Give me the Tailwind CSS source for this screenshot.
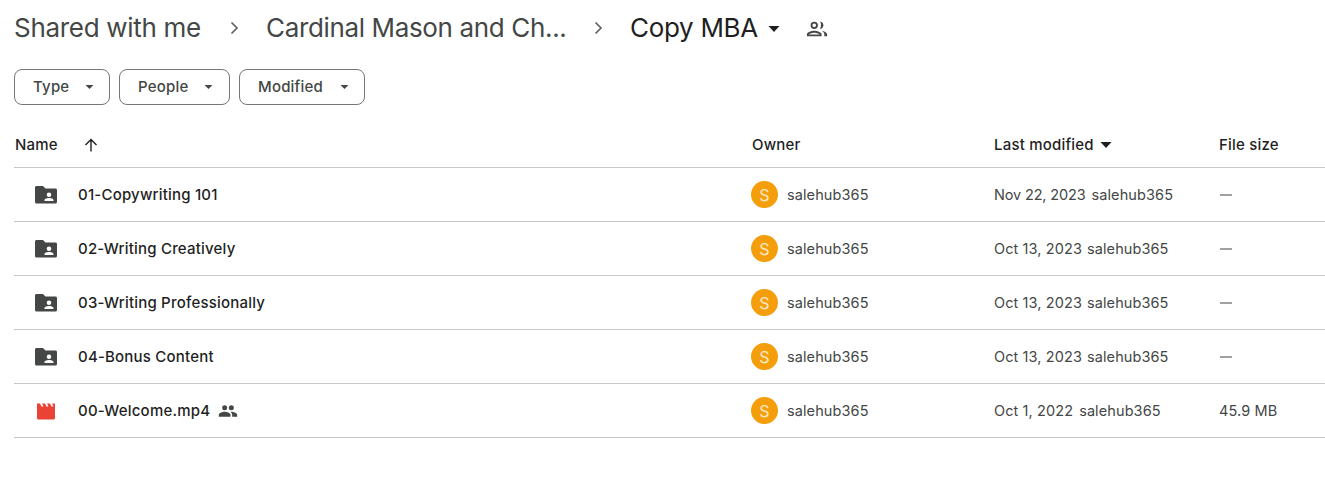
<!DOCTYPE html>
<html>
<head>
<meta charset="utf-8">
<script src="https://cdn.jsdelivr.net/npm/@tailwindcss/browser@4"></script>
</head>
<body class="bg-white font-['Inter',sans-serif] w-[1325px] h-[486px] overflow-hidden">
<div class="pl-[14px]">
  <div class="h-[54px] flex items-center text-[26px] text-[#444746] tracking-[-0.3px]">
    <span class="w-[189px] whitespace-nowrap">Shared with me</span>
    <svg class="w-[14px] h-[14px] ml-[25px] mt-[2px]" viewBox="0 0 14 14" fill="none" stroke="#5f6368" stroke-width="1.7"><path d="M3.5 1.5 9 7 3.5 12.5"/></svg>
    <span class="ml-[24px] w-[300px] whitespace-nowrap tracking-[-0.35px]">Cardinal Mason and Ch...</span>
    <svg class="w-[14px] h-[14px] ml-[26px] mt-[2px]" viewBox="0 0 14 14" fill="none" stroke="#5f6368" stroke-width="1.7"><path d="M3.5 1.5 9 7 3.5 12.5"/></svg>
    <span class="ml-[24px] w-[129px] whitespace-nowrap text-[#1f1f1f]">Copy MBA</span>
    <svg class="w-[12px] h-[6px] ml-[9px] mt-[3px]" viewBox="0 0 12 6" fill="#1f1f1f"><path d="M0.5 0h11L6 6z"/></svg>
    <svg class="w-[22px] h-[22px] ml-[26px] mt-[3px]" viewBox="0 0 24 24" fill="#444746"><path d="M9 12a4 4 0 1 0 0-8 4 4 0 0 0 0 8zm0-6a2 2 0 1 1 0 4 2 2 0 0 1 0-4zm0 8c-2.700 0-8 1.300-8 4v2h16v-2c0-2.700-5.300-4-8-4zm-6 4c.2-.7 3.300-2 6-2s5.800 1.300 6 2H3zM15.100 4.100c1.700.7 1.700 6.100 0 7.800 2.200.3 3.900-1.700 3.900-3.900s-1.700-4.200-3.900-3.900zM17 14c1.700 1 3 2.300 3 4v2h3v-2c0-2.300-3.600-3.700-6-4z"/></svg>
  </div>
  <div class="mt-[15px] flex gap-[9px] text-[15px] font-[450] text-[#444746] tracking-[0.2px]">
    <div class="w-[96px] h-[36px] border border-[#747775] rounded-[8px] flex items-center pl-[18px]"><span class="w-[52px]">Type</span><svg class="w-[9px] h-[4px]" viewBox="0 0 10 5" fill="#444746"><path d="M0 0h10L5 5z"/></svg></div>
    <div class="w-[111px] h-[36px] border border-[#747775] rounded-[8px] flex items-center pl-[18px]"><span class="w-[66px]">People</span><svg class="w-[9px] h-[4px]" viewBox="0 0 10 5" fill="#444746"><path d="M0 0h10L5 5z"/></svg></div>
    <div class="w-[126px] h-[36px] border border-[#747775] rounded-[8px] flex items-center pl-[18px]"><span class="w-[82px]">Modified</span><svg class="w-[9px] h-[4px]" viewBox="0 0 10 5" fill="#444746"><path d="M0 0h10L5 5z"/></svg></div>
  </div>
  <div class="mt-[18px] grid grid-cols-[737px_242px_225px_1fr] text-[14.5px] tracking-[0.1px]">
    <div class="h-[45px] pl-px flex items-center text-[15px] font-[450] tracking-[0.2px] text-[#1f1f1f] border-b border-[#c7c7c7]"><span class="w-[62px]">Name</span><svg class="w-[16px] h-[16px] ml-[6px]" viewBox="0 0 16 16" fill="none" stroke="#1f1f1f" stroke-width="1.4"><path d="M8 14.500V2.500M2.500 8 8 2.500 13.500 8"/></svg></div>
    <div class="h-[45px] pl-px flex items-center text-[15px] font-[450] tracking-[0.2px] text-[#1f1f1f] border-b border-[#c7c7c7]">Owner</div>
    <div class="h-[45px] pl-px flex items-center text-[15px] font-[450] tracking-[0.2px] text-[#1f1f1f] border-b border-[#c7c7c7]">Last modified<svg class="w-[12px] h-[6px] ml-[6px]" viewBox="0 0 12 6" fill="#1f1f1f"><path d="M0.500 0h11L6 6z"/></svg></div>
    <div class="h-[45px] pl-px flex items-center text-[15px] font-[450] tracking-[0.2px] text-[#1f1f1f] border-b border-[#c7c7c7]">File size</div>

    <div class="h-[54px] flex items-center border-b border-[#c7c7c7] text-[15px] font-[450] tracking-[0.2px] text-[#1f1f1f]"><svg class="w-[24px] h-[24px] ml-[20px] mr-[20px]" viewBox="0 0 24 24" fill="#444746"><path d="M1 4.500C1 3.700 1.700 3 2.500 3H9l2.500 2.500h10c.800 0 1.500.700 1.500 1.500v12c0 .800-.700 1.500-1.500 1.500h-19C1.700 20.500 1 19.800 1 19zM15 9.500a2.300 2.300 0 1 0 0 4.600 2.300 2.300 0 0 0 0-4.600zM10.500 18h9v-1c0-1.300-3-2-4.500-2s-4.500.700-4.500 2z" fill-rule="evenodd"/></svg><span class="mt-[2px]">01-Copywriting 101</span></div>
    <div class="h-[54px] flex items-center border-b border-[#c7c7c7] text-[#444746]"><span class="w-[27px] h-[27px] rounded-full bg-[#f59e0b] text-[#fde9c4] text-[16px] flex items-center justify-center mr-[9px]">S</span>salehub365</div>
    <div class="h-[54px] pl-px flex items-center border-b border-[#c7c7c7] text-[#444746] gap-[6px]"><span class="tracking-[-0.15px]">Nov 22, 2023</span><span class="tracking-[0.1px]">salehub365</span></div>
    <div class="h-[54px] pl-[2px] flex items-center border-b border-[#c7c7c7] text-[#444746]"><span class="w-[12px] h-[1.5px] mt-px bg-[#a0a2a1]"></span></div>

    <div class="h-[54px] flex items-center border-b border-[#c7c7c7] text-[15px] font-[450] tracking-[0.2px] text-[#1f1f1f]"><svg class="w-[24px] h-[24px] ml-[20px] mr-[20px]" viewBox="0 0 24 24" fill="#444746"><path d="M1 4.500C1 3.700 1.700 3 2.500 3H9l2.500 2.500h10c.800 0 1.500.700 1.500 1.500v12c0 .800-.700 1.500-1.500 1.500h-19C1.700 20.500 1 19.800 1 19zM15 9.500a2.300 2.300 0 1 0 0 4.600 2.300 2.300 0 0 0 0-4.600zM10.500 18h9v-1c0-1.300-3-2-4.500-2s-4.500.700-4.500 2z" fill-rule="evenodd"/></svg><span class="mt-[2px]">02-Writing Creatively</span></div>
    <div class="h-[54px] flex items-center border-b border-[#c7c7c7] text-[#444746]"><span class="w-[27px] h-[27px] rounded-full bg-[#f59e0b] text-[#fde9c4] text-[16px] flex items-center justify-center mr-[9px]">S</span>salehub365</div>
    <div class="h-[54px] pl-px flex items-center border-b border-[#c7c7c7] text-[#444746] gap-[5px]"><span>Oct 13, 2023</span><span>salehub365</span></div>
    <div class="h-[54px] pl-[2px] flex items-center border-b border-[#c7c7c7] text-[#444746]"><span class="w-[12px] h-[1.5px] mt-px bg-[#a0a2a1]"></span></div>

    <div class="h-[54px] flex items-center border-b border-[#c7c7c7] text-[15px] font-[450] tracking-[0.2px] text-[#1f1f1f]"><svg class="w-[24px] h-[24px] ml-[20px] mr-[20px]" viewBox="0 0 24 24" fill="#444746"><path d="M1 4.500C1 3.700 1.700 3 2.500 3H9l2.500 2.500h10c.800 0 1.500.700 1.500 1.500v12c0 .800-.700 1.500-1.500 1.500h-19C1.700 20.500 1 19.800 1 19zM15 9.500a2.300 2.300 0 1 0 0 4.600 2.300 2.300 0 0 0 0-4.600zM10.500 18h9v-1c0-1.300-3-2-4.500-2s-4.500.700-4.500 2z" fill-rule="evenodd"/></svg><span class="mt-[2px]">03-Writing Professionally</span></div>
    <div class="h-[54px] flex items-center border-b border-[#c7c7c7] text-[#444746]"><span class="w-[27px] h-[27px] rounded-full bg-[#f59e0b] text-[#fde9c4] text-[16px] flex items-center justify-center mr-[9px]">S</span>salehub365</div>
    <div class="h-[54px] pl-px flex items-center border-b border-[#c7c7c7] text-[#444746] gap-[5px]"><span>Oct 13, 2023</span><span>salehub365</span></div>
    <div class="h-[54px] pl-[2px] flex items-center border-b border-[#c7c7c7] text-[#444746]"><span class="w-[12px] h-[1.5px] mt-px bg-[#a0a2a1]"></span></div>

    <div class="h-[54px] flex items-center border-b border-[#c7c7c7] text-[15px] font-[450] tracking-[0.2px] text-[#1f1f1f]"><svg class="w-[24px] h-[24px] ml-[20px] mr-[20px]" viewBox="0 0 24 24" fill="#444746"><path d="M1 4.500C1 3.700 1.700 3 2.500 3H9l2.500 2.500h10c.800 0 1.500.700 1.500 1.500v12c0 .800-.700 1.500-1.500 1.500h-19C1.700 20.500 1 19.800 1 19zM15 9.500a2.300 2.300 0 1 0 0 4.600 2.300 2.300 0 0 0 0-4.600zM10.500 18h9v-1c0-1.300-3-2-4.500-2s-4.500.700-4.500 2z" fill-rule="evenodd"/></svg><span class="mt-[2px]">04-Bonus Content</span></div>
    <div class="h-[54px] flex items-center border-b border-[#c7c7c7] text-[#444746]"><span class="w-[27px] h-[27px] rounded-full bg-[#f59e0b] text-[#fde9c4] text-[16px] flex items-center justify-center mr-[9px]">S</span>salehub365</div>
    <div class="h-[54px] pl-px flex items-center border-b border-[#c7c7c7] text-[#444746] gap-[5px]"><span>Oct 13, 2023</span><span>salehub365</span></div>
    <div class="h-[54px] pl-[2px] flex items-center border-b border-[#c7c7c7] text-[#444746]"><span class="w-[12px] h-[1.5px] mt-px bg-[#a0a2a1]"></span></div>

    <div class="h-[54px] flex items-center border-b border-[#c7c7c7] text-[15px] font-[450] tracking-[0.2px] text-[#1f1f1f]"><svg class="w-[24px] h-[24px] ml-[20px] mr-[20px]" viewBox="0 0 24 24" fill="#ea4335"><path d="M3 4.500h3l1.500 3H9.500L8 4.500h3l1.500 3h2L13 4.500h3l1.500 3h2L18 4.500h2.500c.300 0 .500.200.500.500v14c0 .800-.700 1.500-1.500 1.500h-15c-.800 0-1.500-.700-1.500-1.500z"/></svg><span class="mt-[2px]">00-Welcome.mp4</span><svg class="w-[20px] h-[20px] ml-[8px]" viewBox="0 0 24 24" fill="#444746"><path d="M16 11a3 3 0 1 0 0-6 3 3 0 0 0 0 6zm-8 0a3 3 0 1 0 0-6 3 3 0 0 0 0 6zm0 2c-2.300 0-7 1.200-7 3.500V19h14v-2.500C15 14.200 10.300 13 8 13zm8 0c-.300 0-.600 0-1 .100 1.200.800 2 2 2 3.400V19h6v-2.500c0-2.300-4.700-3.500-7-3.500z"/></svg></div>
    <div class="h-[54px] flex items-center border-b border-[#c7c7c7] text-[#444746]"><span class="w-[27px] h-[27px] rounded-full bg-[#f59e0b] text-[#fde9c4] text-[16px] flex items-center justify-center mr-[9px]">S</span>salehub365</div>
    <div class="h-[54px] pl-px flex items-center border-b border-[#c7c7c7] text-[#444746] gap-[6px]"><span>Oct 1, 2022</span><span>salehub365</span></div>
    <div class="h-[54px] pl-px flex items-center border-b border-[#c7c7c7] text-[#444746]">45.9 MB</div>
  </div>
</div>
</body>
</html>
